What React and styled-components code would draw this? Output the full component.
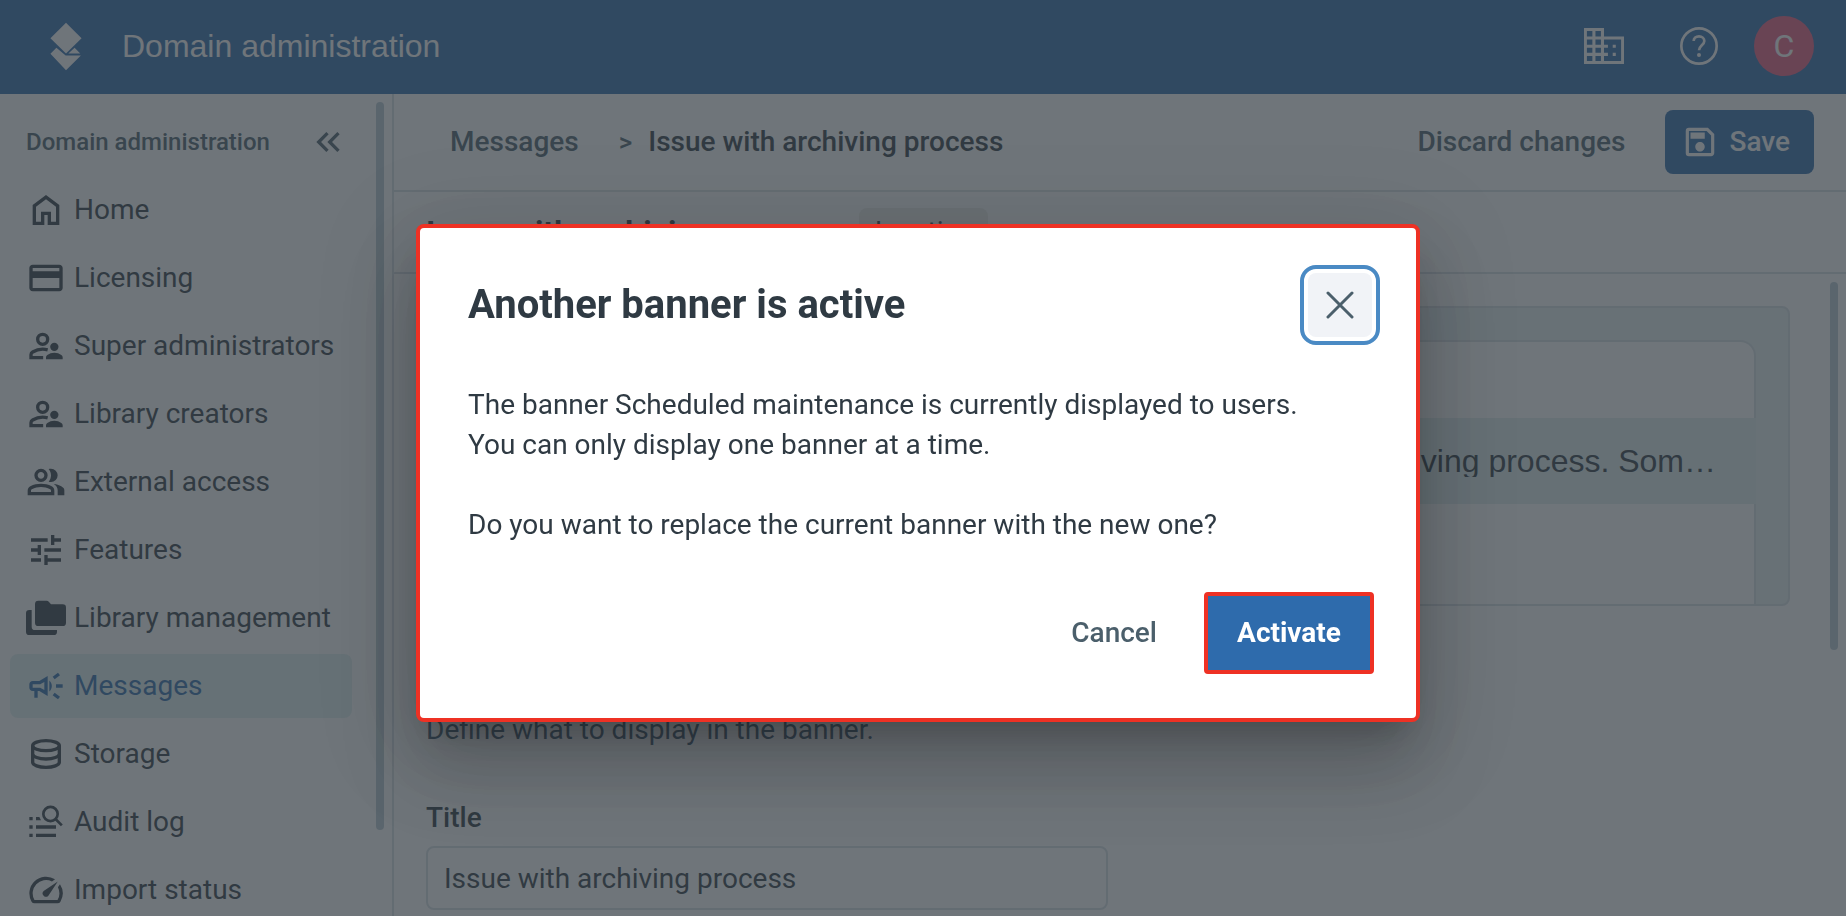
import React from 'react';
import styled, { createGlobalStyle, css } from 'styled-components';
import {
  MdCreditCard,
  MdKeyboardDoubleArrowLeft,
  MdOutlineCampaign,
  MdOutlineSave,
  MdSpeed,
  MdTune,
} from 'react-icons/md';

const GlobalStyle = createGlobalStyle`
  *, *::before, *::after {
    box-sizing: border-box;
  }
  body {
    margin: 0;
    background: #ffffff;
    color: #2f3a43;
    font-family: Roboto, "Liberation Sans", sans-serif;
    font-size: 28px;
    line-height: 40px;
    overflow: hidden;
  }
  h1, h2, p, ul {
    margin: 0;
    padding: 0;
  }
  button, input {
    font: inherit;
    color: inherit;
  }
  svg {
    display: block;
    flex: none;
  }
`;

const Page = styled.div`
  display: flex;
  flex-direction: column;
  height: 100vh;
`;

/* top bar */
const TopBar = styled.header`
  display: flex;
  align-items: center;
  flex: none;
  height: 94px;
  padding: 0 32px 2px 50px;
  background: #2e6bac;
  color: #ffffff;
`;

const AppName = styled.span`
  margin-left: 40px;
  font-family: "Liberation Sans", Arial, sans-serif;
  font-size: 32px;
`;

const TopActions = styled.div`
  display: flex;
  align-items: center;
  margin-left: auto;
`;

const IconButton = styled.button`
  display: flex;
  padding: 0;
  border: 0;
  background: none;
  cursor: pointer;
`;

const HelpButton = styled(IconButton)`
  margin: 0 36px 0 56px;
`;

const Avatar = styled.button`
  width: 60px;
  height: 60px;
  padding: 0;
  border: 0;
  border-radius: 50%;
  background: #eb5c80;
  font-size: 32px;
`;

/* sidebar */
const Columns = styled.div`
  display: flex;
  flex: 1;
  min-height: 0;
`;

const Sidebar = styled.aside`
  display: flex;
  flex: none;
  width: 394px;
  padding-right: 8px;
  border-right: 2px solid #d8dfe4;
`;

const SidebarContent = styled.div`
  flex: 1;
  padding: 24px 24px 0 10px;
  overflow: hidden;
`;

const Thumb = styled.div`
  flex: none;
  width: 8px;
  height: ${(props) => props.$length}px;
  margin-top: 8px;
  border-radius: 4px;
  background: #b9cad3;
`;

const SidebarHead = styled.div`
  display: flex;
  align-items: center;
  justify-content: space-between;
  height: 48px;
  margin-bottom: 12px;
  padding: 0 4px 0 16px;
  color: #4b5f6b;
`;

const SidebarTitle = styled.h2`
  font-size: 24px;
  font-weight: 500;
`;

const NavList = styled.ul`
  display: flex;
  flex-direction: column;
  gap: 4px;
  list-style: none;
`;

const NavLink = styled.a`
  display: flex;
  align-items: center;
  gap: 8px;
  height: 64px;
  padding: 0 16px;
  border-radius: 8px;
  color: inherit;
  text-decoration: none;
  white-space: nowrap;
  ${(props) =>
    props.$active &&
    css`
      background: #e2f0f0;
      color: #2e6bac;
    `}
`;

/* main column */
const Main = styled.main`
  display: flex;
  flex-direction: column;
  flex: 1;
  min-width: 0;
`;

const Toolbar = styled.div`
  display: flex;
  align-items: center;
  flex: none;
  height: 98px;
  padding: 0 32px 0 56px;
  border-bottom: 2px solid #d8dfe4;
  font-weight: 500;
`;

const Crumb = styled.a`
  color: #4b5f6b;
  text-decoration: none;
`;

const CrumbSeparator = styled.span`
  margin: 0 16px 0 40px;
  color: #4b5f6b;
  font-size: 26px;
`;

const ToolbarActions = styled.div`
  display: flex;
  align-items: center;
  gap: 40px;
  margin-left: auto;
`;

const TextButton = styled.button`
  padding: 0;
  border: 0;
  background: none;
  color: #4b5f6b;
  font-weight: 500;
`;

const SaveButton = styled.button`
  display: flex;
  align-items: center;
  gap: 10px;
  height: 64px;
  padding: 0 24px 0 16px;
  border: 0;
  border-radius: 8px;
  background: #2e6bac;
  color: #ffffff;
  font-weight: 500;
`;

const TitleRow = styled.div`
  display: flex;
  align-items: center;
  flex: none;
  gap: 24px;
  height: 82px;
  padding: 0 32px;
  border-bottom: 2px solid #d8dfe4;
`;

const PageTitle = styled.h1`
  font-size: 32px;
  font-weight: 700;
`;

const Badge = styled.span`
  padding: 4px 16px;
  border-radius: 8px;
  background: #eeeeea;
`;

const ContentRow = styled.div`
  display: flex;
  flex: 1;
  min-height: 0;
  padding-right: 8px;
`;

const Content = styled.div`
  flex: 1;
  min-width: 0;
  padding: 32px 40px 0 32px;
  overflow: hidden;
`;

const Preview = styled.div`
  height: 300px;
  padding: 32px 32px 0;
  border: 2px solid #d8dfe4;
  border-radius: 8px;
  background: #e6f0f2;
  overflow: hidden;
`;

const PreviewWindow = styled.div`
  height: 100%;
  padding-top: 76px;
  border: 2px solid #d8dfe4;
  border-bottom: 0;
  border-radius: 16px 16px 0 0;
  background: #ffffff;
`;

const PreviewBanner = styled.div`
  display: flex;
  align-items: center;
  justify-content: flex-end;
  height: 86px;
  margin: 0 -2px;
  padding: 0 40px;
  background: #e0eeef;
`;

const PreviewText = styled.p`
  font-family: "Liberation Sans", Arial, sans-serif;
  font-size: 32px;
  line-height: 32px;
  white-space: nowrap;
  overflow: hidden;
`;

const Hint = styled.p`
  margin: 104px 0 48px;
  color: #3f5a70;
`;

const Field = styled.div`
  display: flex;
  flex-direction: column;
  gap: 8px;
  max-width: 682px;
`;

const Label = styled.label`
  font-weight: 500;
`;

const TextInput = styled.input`
  width: 100%;
  height: 64px;
  padding: 0 16px;
  border: 2px solid #d8dfe4;
  border-radius: 8px;
  background: #ffffff;
`;

/* dialog */
const Backdrop = styled.div`
  position: fixed;
  inset: 0;
  display: flex;
  align-items: flex-start;
  justify-content: center;
  padding: 224px 10px 0 0;
  background: rgba(50, 58, 66, 0.7);
`;

const Dialog = styled.div`
  width: 1004px;
  max-width: 100%;
  border: 4px solid #ee3124;
  border-radius: 8px;
  background: #ffffff;
  box-shadow:
    0 22px 30px -14px rgba(0, 0, 0, 0.2),
    0 48px 76px 6px rgba(0, 0, 0, 0.14),
    0 18px 92px 16px rgba(0, 0, 0, 0.12);
`;

const DialogHead = styled.div`
  display: flex;
  align-items: center;
  justify-content: space-between;
  padding: 37px 36px 0 48px;
`;

const DialogTitle = styled.h2`
  font-size: 40px;
  font-weight: 700;
`;

const CloseButton = styled.button`
  display: flex;
  align-items: center;
  justify-content: center;
  width: 80px;
  height: 80px;
  padding: 4px;
  border: 4px solid #4a8ac4;
  border-radius: 16px;
  background: #f1f3f7 content-box;
  color: #4b5f6b;
`;

const DialogBody = styled.div`
  display: flex;
  flex-direction: column;
  gap: 40px;
  padding: 40px 48px 47px;
`;

const DialogActions = styled.div`
  display: flex;
  align-items: center;
  justify-content: flex-end;
  gap: 47px;
  padding: 0 42px 44px;
`;

const ActivateButton = styled.button`
  width: 170px;
  height: 82px;
  padding: 0;
  border: 4px solid #ee3124;
  border-radius: 4px;
  background: #2e6bac;
  color: #ffffff;
  font-weight: 700;
`;

const Icon = ({ children, size = 40, box = '0 0 24 24' }) => (
  <svg width={size} height={size} viewBox={box} fill="currentColor" aria-hidden="true">
    {children}
  </svg>
);

const Logo = () => (
  <svg width="32" height="49" viewBox="150 64 96 148" fill="currentColor" aria-hidden="true">
    <path d="M198 66l47 47-47 46-47-46z" />
    <path d="M151 160l18-18 28 23h46l-45 45z" />
    <path d="M224 142l17 17h-36z" />
  </svg>
);

const HomeIcon = () => (
  <Icon>
    <path d="M6 19h3v-6h6v6h3v-9l-6-4.5L6 10v9Zm-2 2V9l8-6 8 6v12h-7v-6h-2v6H4Z" />
  </Icon>
);

const SupervisorIcon = () => (
  <Icon>
    <circle cx="10" cy="8" r="3" fill="none" stroke="currentColor" strokeWidth="2" />
    <path
      d="M13 14.3A12 12 0 0 0 4 15.6Q3 16.2 3 17.2V19h7.3"
      fill="none"
      stroke="currentColor"
      strokeWidth="2"
    />
    <circle cx="17" cy="12.5" r="2.5" />
    <path d="M12 20v-1.2q0-.9.8-1.4Q14.6 16 17 16t4.2 1.4q.8.5.8 1.4V20z" />
  </Icon>
);

const GroupIcon = () => (
  <Icon>
    <path d="M1 20v-2.8q0-.85.438-1.562T2.6 14.55q1.55-.775 3.15-1.162T9 13t3.25.388t3.15 1.162q.725.375 1.163 1.088T17 17.2V20zm18 0v-3q0-1.1-.612-2.113T16.65 13.15q1.275.15 2.4.513t2.1.887q.9.5 1.375 1.112T23 17v3zM9 12q-1.65 0-2.825-1.175T5 8t1.175-2.825T9 4t2.825 1.175T13 8t-1.175 2.825T9 12m10-4q0 1.65-1.175 2.825T15 12q-.275 0-.7-.062t-.7-.138q.675-.8 1.038-1.775T15 8t-.362-2.025T13.6 4.2q.35-.125.7-.163T15 4q1.65 0 2.825 1.175T19 8M3 18h12v-.8q0-.275-.137-.5t-.363-.35q-1.35-.675-2.725-1.012T9 15t-2.775.338T3.5 16.35q-.225.125-.363.35T3 17.2zm6-8q.825 0 1.413-.587T11 8t-.587-1.412T9 6t-1.412.588T7 8t.588 1.413T9 10" />
  </Icon>
);

const FoldersIcon = () => (
  <Icon box="0 0 120 120">
    <path d="M37 8h25q4 0 7 4l6 7h35q10 0 10 10v45q0 10-10 10H37q-10 0-10-10V18q0-10 10-10z" />
    <path d="M10 36h7v50q0 10 10 10h66v5q0 10-10 10H10q-10 0-10-10V46q0-10 10-10z" />
  </Icon>
);

const DatabaseIcon = () => (
  <Icon>
    <g fill="none" stroke="currentColor" strokeWidth="2">
      <ellipse cx="12" cy="7" rx="8" ry="3" />
      <path d="M4 7v5c0 1.66 3.6 3 8 3s8-1.34 8-3V7" />
      <path d="M4 12v5c0 1.66 3.6 3 8 3s8-1.34 8-3v-5" />
    </g>
  </Icon>
);

const AuditIcon = () => (
  <Icon>
    <path d="M2 9h2v2H2zM6 9h2l1 2H6zM2 14h2v2H2zM6 14h12v2H6zM2 19h2v2H2zM6 19h12v2H6z" />
    <g fill="none" stroke="currentColor" strokeWidth="1.6">
      <circle cx="14.7" cy="7.2" r="4.3" />
      <path d="M17.7 10.2l3.8 3.8" />
    </g>
  </Icon>
);

const BuildingIcon = () => (
  <svg width="40" height="36" viewBox="0 0 117 105" fill="none" stroke="currentColor" strokeWidth="9" aria-hidden="true">
    <path d="M4 4h50v97H4zM29 4v97M4 29h50M4 53h66M4 77h66M54 29h59v72H54" />
    <path d="M84 53h9M84 77h9" />
  </svg>
);

const HelpIcon = () => (
  <svg width="38" height="38" viewBox="0 0 114 114" fill="none" stroke="currentColor" strokeWidth="8" aria-hidden="true">
    <circle cx="57" cy="57" r="53" />
    <path d="M41 42c0-9 7-14 16-14s16 6 16 14c0 12-16 14-16 28" />
    <circle cx="57" cy="84" r="6" fill="currentColor" stroke="none" />
  </svg>
);

const CloseIcon = () => (
  <svg width="28" height="28" viewBox="0 0 28 28" stroke="currentColor" strokeWidth="3" strokeLinecap="round" aria-hidden="true">
    <path d="M2 2l24 24M26 2L2 26" />
  </svg>
);

const navItems = [
  { label: 'Home', icon: <HomeIcon /> },
  { label: 'Licensing', icon: <MdCreditCard size={40} /> },
  { label: 'Super administrators', icon: <SupervisorIcon /> },
  { label: 'Library creators', icon: <SupervisorIcon /> },
  { label: 'External access', icon: <GroupIcon /> },
  { label: 'Features', icon: <MdTune size={40} /> },
  { label: 'Library management', icon: <FoldersIcon /> },
  { label: 'Messages', icon: <MdOutlineCampaign size={40} />, active: true },
  { label: 'Storage', icon: <DatabaseIcon /> },
  { label: 'Audit log', icon: <AuditIcon /> },
  { label: 'Import status', icon: <MdSpeed size={40} /> },
];

function Header() {
  return (
    <TopBar>
      <Logo />
      <AppName>Domain administration</AppName>
      <TopActions>
        <IconButton aria-label="Domains">
          <BuildingIcon />
        </IconButton>
        <HelpButton aria-label="Help">
          <HelpIcon />
        </HelpButton>
        <Avatar>C</Avatar>
      </TopActions>
    </TopBar>
  );
}

function SideNav() {
  return (
    <Sidebar>
      <SidebarContent>
        <SidebarHead>
          <SidebarTitle>Domain administration</SidebarTitle>
          <IconButton aria-label="Collapse menu">
            <MdKeyboardDoubleArrowLeft size={40} />
          </IconButton>
        </SidebarHead>
        <nav>
          <NavList>
            {navItems.map((item) => (
              <li key={item.label}>
                <NavLink href="#" $active={item.active}>
                  {item.icon}
                  {item.label}
                </NavLink>
              </li>
            ))}
          </NavList>
        </nav>
      </SidebarContent>
      <Thumb $length={728} />
    </Sidebar>
  );
}

function MessageEditor() {
  return (
    <Main>
      <Toolbar>
        <Crumb href="#">Messages</Crumb>
        <CrumbSeparator>&gt;</CrumbSeparator>
        <span>Issue with archiving process</span>
        <ToolbarActions>
          <TextButton>Discard changes</TextButton>
          <SaveButton>
            <MdOutlineSave size={38} />
            Save
          </SaveButton>
        </ToolbarActions>
      </Toolbar>
      <TitleRow>
        <PageTitle>Issue with archiving process</PageTitle>
        <Badge>Inactive</Badge>
      </TitleRow>
      <ContentRow>
        <Content>
          <Preview>
            <PreviewWindow>
              <PreviewBanner>
                <PreviewText>Issue with archiving process. Som…</PreviewText>
              </PreviewBanner>
            </PreviewWindow>
          </Preview>
          <Hint>Define what to display in the banner.</Hint>
          <Field>
            <Label htmlFor="title">Title</Label>
            <TextInput id="title" defaultValue="Issue with archiving process" />
          </Field>
        </Content>
        <Thumb $length={368} />
      </ContentRow>
    </Main>
  );
}

function ActivateDialog() {
  return (
    <Backdrop>
      <Dialog role="dialog" aria-modal="true" aria-labelledby="dialog-title">
        <DialogHead>
          <DialogTitle id="dialog-title">Another banner is active</DialogTitle>
          <CloseButton aria-label="Close">
            <CloseIcon />
          </CloseButton>
        </DialogHead>
        <DialogBody>
          <p>
            The banner Scheduled maintenance is currently displayed to users.
            <br />
            You can only display one banner at a time.
          </p>
          <p>Do you want to replace the current banner with the new one?</p>
        </DialogBody>
        <DialogActions>
          <TextButton>Cancel</TextButton>
          <ActivateButton>Activate</ActivateButton>
        </DialogActions>
      </Dialog>
    </Backdrop>
  );
}

function App() {
  return (
    <Page>
      <GlobalStyle />
      <Header />
      <Columns>
        <SideNav />
        <MessageEditor />
      </Columns>
      <ActivateDialog />
    </Page>
  );
}

export default App;
